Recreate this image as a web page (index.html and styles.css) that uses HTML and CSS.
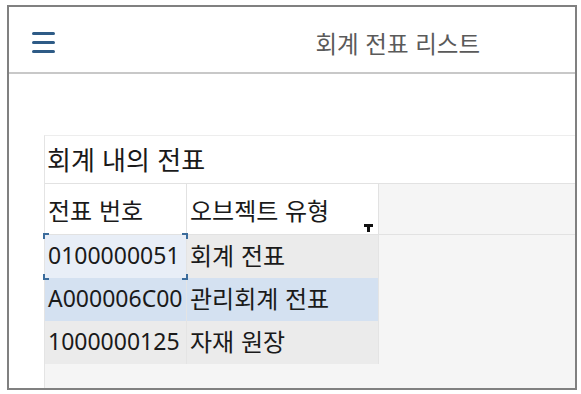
FILE: index.html
```html
<!DOCTYPE html>
<html lang="ko">
<head>
    <meta charset="UTF-8">
    <meta name="viewport" content="width=device-width, initial-scale=1.0">
    <title>회계 전표 리스트</title>
    <link rel="stylesheet" href="styles.css">
</head>
<body>

    <div class="frame">
        <header class="appbar">
            <button class="menu-btn" aria-label="메뉴">
                <span></span><span></span><span></span>
            </button>
            <h1 class="appbar-title">회계 전표 리스트</h1>
        </header>

        <main class="content">
            <section class="panel">
                <h2 class="panel-title">회계 내의 전표</h2>

                <div class="grid">
                    <div class="head-cell">전표 번호</div>
                    <div class="head-cell">오브젝트 유형
                        <svg class="filter" width="9" height="8" viewBox="0 0 9 8">
                            <path d="M0 0H9V3H6V8H3V3H0Z" fill="#111"/>
                        </svg>
                    </div>
                    <div class="head-rest"></div>

                    <div class="cell num focused">0100000051</div>
                    <div class="cell">회계 전표</div>
                    <div class="rest"></div>

                    <div class="cell num selected">A000006C00</div>
                    <div class="cell selected">관리회계 전표</div>
                    <div class="rest"></div>

                    <div class="cell num">1000000125</div>
                    <div class="cell">자재 원장</div>
                    <div class="rest"></div>
                </div>
            </section>
        </main>
    </div>

</body>
</html>
```

FILE: styles.css
```css
* {
    box-sizing: border-box;
}

body {
    margin: 0;
    font-family: "Noto Sans CJK KR", sans-serif;
    background: #ffffff;
    color: #1a1a1a;
}

.frame {
    margin: 5px 4px 4px 7px;
    height: 385px;
    border: 2px solid #808080;
    display: flex;
    flex-direction: column;
}

.appbar {
    height: 67px;
    flex: none;
    display: flex;
    align-items: center;
    justify-content: space-between;
    padding: 6px 95px 0 23px;
    border-bottom: 2px solid #c8c8c8;
}

.menu-btn {
    width: 23px;
    padding: 0;
    border: none;
    background: none;
    display: flex;
    flex-direction: column;
    gap: 6px;
}

.menu-btn span {
    display: block;
    height: 3px;
    border-radius: 2px;
    background: #2e5b86;
}

.appbar-title {
    margin: 0;
    font-size: 23.5px;
    font-weight: normal;
    color: #5a5a5a;
}

.content {
    flex: 1;
    display: flex;
    flex-direction: column;
    padding: 61px 0 0 35px;
}

.panel {
    flex: 1;
    display: flex;
    flex-direction: column;
    border-top: 1px solid #ededed;
    border-left: 1px solid #e4e4e4;
}

.panel-title {
    margin: 0;
    height: 47px;
    padding: 5px 0 0 2px;
    font-size: 26px;
    font-weight: normal;
    line-height: 36px;
}

.grid {
    flex: 1;
    display: grid;
    grid-template-columns: 142px 192px 1fr;
    grid-template-rows: 51px 43px 43px 43px 1fr;
    align-content: start;
    background: #f5f5f5;
    border-top: 1px solid #e2e2e2;
    font-size: 24px;
}

.head-cell {
    position: relative;
    background: #ffffff;
    border-right: 1px solid #e2e2e2;
    border-bottom: 1px solid #e2e2e2;
    padding: 8px 0 0 3px;
}

.head-rest {
    border-bottom: 1px solid #e2e2e2;
}

.filter {
    position: absolute;
    right: 5px;
    bottom: 2px;
}

.cell {
    position: relative;
    background: #ebebeb;
    border-right: 1px solid #e4e4e4;
    padding: 2px 0 0 3px;
    white-space: nowrap;
}

.cell.num {
    font-family: "Noto Sans", sans-serif;
    font-size: 23px;
    padding-top: 4px;
}

.cell.selected {
    background: #d4e1f1;
}

.cell.focused {
    z-index: 1;
    background: #e8eef7;
}

.cell.focused::before {
    content: "";
    position: absolute;
    left: -2px;
    right: -2px;
    top: -2px;
    bottom: -2px;
    pointer-events: none;
    background:
        linear-gradient(#3b6c9c, #3b6c9c) left top / 6px 2px,
        linear-gradient(#3b6c9c, #3b6c9c) left top / 2px 6px,
        linear-gradient(#3b6c9c, #3b6c9c) right top / 6px 2px,
        linear-gradient(#3b6c9c, #3b6c9c) right top / 2px 6px,
        linear-gradient(#3b6c9c, #3b6c9c) left bottom / 6px 2px,
        linear-gradient(#3b6c9c, #3b6c9c) left bottom / 2px 6px,
        linear-gradient(#3b6c9c, #3b6c9c) right bottom / 6px 2px,
        linear-gradient(#3b6c9c, #3b6c9c) right bottom / 2px 6px;
    background-repeat: no-repeat;
}

.rest {
    background: #f5f5f5;
}
```
